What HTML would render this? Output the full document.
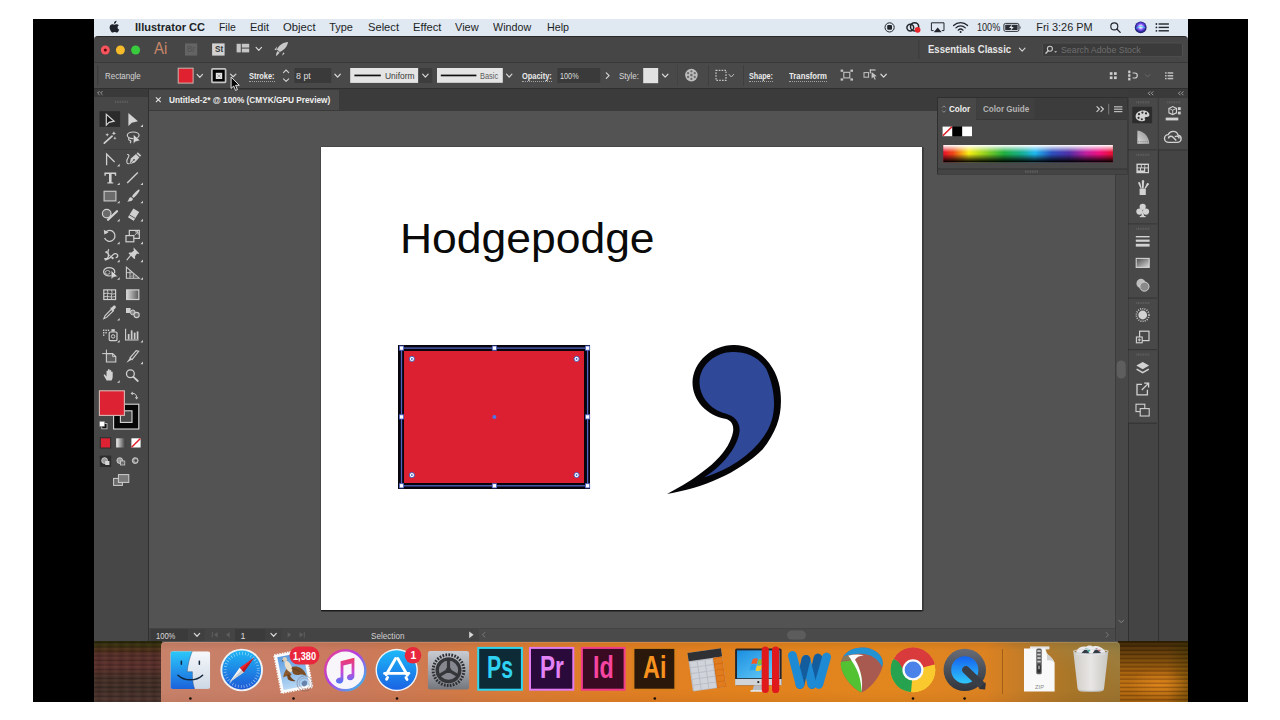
<!DOCTYPE html>
<html><head><meta charset="utf-8"><title>Illustrator CC</title>
<style>
html,body{margin:0;padding:0;background:#fff;}
body{width:1280px;height:720px;position:relative;overflow:hidden;font-family:"Liberation Sans",sans-serif;}
.r{position:absolute;display:block;box-sizing:border-box;}
.t{position:absolute;white-space:nowrap;display:block;}
</style></head><body>
<div class="r" style="left:33px;top:19px;width:1215.00px;height:683.00px;background:#000;"></div>
<div class="r" style="left:93.5px;top:19px;width:1094.00px;height:683.00px;background:#535353;"></div>
<div class="r" style="left:93.5px;top:19px;width:1094.00px;height:21.00px;background:#e0e8f2;"></div>
<div class="r" style="left:93.5px;top:35.6px;width:1094.00px;height:26.40px;background:#464646;border-top:1px solid #2a2a2a;border-radius:4px 4px 0 0;"></div>
<div class="r" style="left:93.5px;top:62px;width:1094.00px;height:26.50px;background:#494949;border-top:1px solid #383838;border-bottom:1px solid #2f2f2f;"></div>
<div class="r" style="left:149px;top:88.5px;width:979.00px;height:21.50px;background:#3b3b3b;"></div>
<div class="r" style="left:149px;top:89.5px;width:189.50px;height:20.50px;background:#494949;"></div>
<div class="r" style="left:149px;top:110px;width:966.00px;height:518.00px;background:#535353;border-top:1px solid #3a3a3a;"></div>
<div class="r" style="left:320.9px;top:146.8px;width:601.10px;height:463.60px;background:#fff;box-shadow:1.4px 0 0 #3a3a3a,0 1.3px 0 #1c1c1c,1.4px 1.3px 0 #2a2a2a,-1px 0 0 #484848,0 -1px 0 #484848;"></div>
<div class="r" style="left:93.5px;top:88.5px;width:55.50px;height:552.50px;background:#474747;border-right:1px solid #303030;"></div>
<div class="r" style="left:93.5px;top:88.5px;width:54.50px;height:8.50px;background:#3a3a3a;"></div>
<div class="r" style="left:149px;top:628px;width:966.00px;height:13.00px;background:#444;"></div>
<div class="r" style="left:1115px;top:110px;width:13.00px;height:531.00px;background:#484848;border-left:1px solid #3c3c3c;"></div>
<div class="r" style="left:1127.5px;top:88.5px;width:30.00px;height:552.50px;background:#444;border-left:1px solid #303030;"></div>
<div class="r" style="left:1157.5px;top:88.5px;width:30.00px;height:552.50px;background:#444;border-left:1px solid #303030;"></div>
<div class="r" style="left:1128px;top:88.5px;width:59.50px;height:9.50px;background:#3a3a3a;"></div>
<span class="t" style="left:400.20px;top:212.62px;font:400 42.8px/51.36px 'Liberation Sans',sans-serif;color:#0a0a0a;transform:scaleX(1.0386);transform-origin:0 0;">Hodgepodge</span>
<div class="r" style="left:398.1px;top:345px;width:192.30px;height:143.50px;background:#dc2031;border:6px solid #08040c;"></div>
<svg class="r" style="left:0px;top:0px;" width="1280" height="720" viewBox="0 0 1280 720"><rect x="401.5" y="348.1" width="186.1" height="137.7" fill="none" stroke="#5064c0" stroke-width="1.3"/><rect x="399.4" y="346.0" width="4.2" height="4.2" fill="#fff" stroke="#4a60c8" stroke-width="0.8"/><rect x="399.4" y="414.8" width="4.2" height="4.2" fill="#fff" stroke="#4a60c8" stroke-width="0.8"/><rect x="399.4" y="483.7" width="4.2" height="4.2" fill="#fff" stroke="#4a60c8" stroke-width="0.8"/><rect x="492.3" y="346.0" width="4.2" height="4.2" fill="#fff" stroke="#4a60c8" stroke-width="0.8"/><rect x="492.3" y="483.7" width="4.2" height="4.2" fill="#fff" stroke="#4a60c8" stroke-width="0.8"/><rect x="585.5" y="346.0" width="4.2" height="4.2" fill="#fff" stroke="#4a60c8" stroke-width="0.8"/><rect x="585.5" y="414.8" width="4.2" height="4.2" fill="#fff" stroke="#4a60c8" stroke-width="0.8"/><rect x="585.5" y="483.7" width="4.2" height="4.2" fill="#fff" stroke="#4a60c8" stroke-width="0.8"/><circle cx="411.9" cy="358.9" r="2.6" fill="#fff" stroke="#3b50b0" stroke-width="0.9"/><circle cx="411.9" cy="358.9" r="0.9" fill="#2f57c0"/><circle cx="411.9" cy="475.1" r="2.6" fill="#fff" stroke="#3b50b0" stroke-width="0.9"/><circle cx="411.9" cy="475.1" r="0.9" fill="#2f57c0"/><circle cx="576.6" cy="358.9" r="2.6" fill="#fff" stroke="#3b50b0" stroke-width="0.9"/><circle cx="576.6" cy="358.9" r="0.9" fill="#2f57c0"/><circle cx="576.6" cy="475.1" r="2.6" fill="#fff" stroke="#3b50b0" stroke-width="0.9"/><circle cx="576.6" cy="475.1" r="0.9" fill="#2f57c0"/><circle cx="494.4" cy="416.9" r="2" fill="#4f74e6"/></svg>
<svg class="r" style="left:650px;top:330px;" width="160" height="180" viewBox="0 0 640 720"><path d="M337,60 C252,58 172,125 170,210 C170,282 228,342 300,355 C328,360 336,384 332,408 C318,480 250,560 68,656 C210,632 350,575 450,478 C512,400 530,330 522,250 C514,158 446,62 337,60 Z" fill="#050508"/>
<path d="M334,88 C267,86 200,137 198,207 C198,268 242,318 302,334 C346,346 364,378 357,414 C346,472 290,546 216,590 C322,556 420,492 470,402 C508,336 503,242 466,158 C436,108 388,88 334,88 Z" fill="#2f4898"/></svg>
<div class="r" style="left:93.5px;top:641px;width:68.50px;height:61.00px;background:#4a2a26;background:repeating-linear-gradient(180deg,rgba(0,0,0,0) 0,rgba(0,0,0,.18) 1.5px,rgba(120,70,60,.15) 3px,rgba(0,0,0,0) 4.5px),repeating-linear-gradient(90deg,rgba(0,0,0,0) 0,rgba(20,0,0,.18) 5px,rgba(0,0,0,0) 11px),linear-gradient(180deg,#2a2c0c 0,#3a3610 4px,#50341c 9px,#5c342e 14px,#603631 27px,#4a342b 35px,#44342c 48px,#523a33 61px);"></div>
<div class="r" style="left:1118px;top:641px;width:69.50px;height:61.00px;background:#7a5010;background:repeating-linear-gradient(180deg,rgba(0,0,0,0) 0,rgba(40,18,0,.30) 1.300px,rgba(255,170,40,.10) 2.700px,rgba(0,0,0,0) 4.100px),radial-gradient(ellipse 30px 16px at 58% 72%,rgba(236,140,30,.65) 0,rgba(236,140,30,0) 100%),linear-gradient(90deg,rgba(0,0,0,0) 0,rgba(0,0,0,0) 70%,rgba(30,40,0,.35) 100%),linear-gradient(180deg,#2c1c04 0,#53340a 8px,#7a4a0c 20px,#a25e0e 32px,#c07214 43px,#b2680f 52px,#9c5a0c 61px);"></div>
<div class="r" style="left:161px;top:641.5px;width:958.50px;height:60.50px;background:#d8843a;border-radius:4px 4px 0 0;background:linear-gradient(180deg,rgba(60,30,0,.10) 0,rgba(0,0,0,0) 14%,rgba(0,0,0,0) 80%,rgba(60,20,0,.06) 100%),linear-gradient(200deg,rgba(140,125,70,.9) 0,rgba(160,130,66,.6) 5%,rgba(190,135,60,.0) 12%),linear-gradient(90deg,#c8826a 0,#c97e66 10%,#ca7a5c 20%,#d07a4c 29%,#da7c36 37%,#e07e26 46%,#e2821e 60%,#e2861e 76%,#dc8222 86%,#bc7a28 91%,#a87628 95%,#9c7430 100%);box-shadow:inset 0 1px 0 rgba(255,255,255,.14);"></div>
<div class="r" style="left:1002.3px;top:648.5px;width:1.00px;height:45.50px;background:rgba(90,45,10,.38);"></div>
<svg class="r" style="left:107.87px;top:19.68px" width="13.07" height="14.17" viewBox="0 0 13.5 15.5" preserveAspectRatio="none"><path d="M8.1,3.1c0.5-0.6,0.8-1.4,0.7-2.2c-0.7,0-1.5,0.5-2,1.1C6.4,2.5,6,3.3,6.1,4.1C6.9,4.2,7.6,3.7,8.1,3.1z M9.9,8.1c0-1.5,1.2-2.2,1.3-2.3c-0.7-1-1.8-1.2-2.2-1.2C8,4.500,7.1,5.2,6.700,5.2c-0.500,0-1.200-0.600-2-0.600c-1,0-2,0.600-2.500,1.500c-1.100,1.900-0.300,4.600,0.800,6.100c0.500,0.700,1.100,1.600,1.900,1.500c0.800,0,1.100-0.500,2-0.500c0.900,0,1.200,0.500,2,0.500c0.800,0,1.400-0.800,1.900-1.500c0.600-0.900,0.800-1.700,0.800-1.700C11.600,10.500,9.900,9.900,9.900,8.100z" fill="#1e232b"/></svg>
<span class="t" style="left:135.20px;top:20.76px;font:700 10.9px/13.08px 'Liberation Sans',sans-serif;color:#1c1f24;transform:scaleX(1.0139);transform-origin:0 0;">Illustrator CC</span>
<span class="t" style="left:219.20px;top:20.76px;font:400 10.9px/13.08px 'Liberation Sans',sans-serif;color:#1c1f24;transform:scaleX(0.9565);transform-origin:0 0;">File</span>
<span class="t" style="left:250.00px;top:20.76px;font:400 10.9px/13.08px 'Liberation Sans',sans-serif;color:#1c1f24;transform:scaleX(1.0116);transform-origin:0 0;">Edit</span>
<span class="t" style="left:283.00px;top:20.76px;font:400 10.9px/13.08px 'Liberation Sans',sans-serif;color:#1c1f24;transform:scaleX(1.0348);transform-origin:0 0;">Object</span>
<span class="t" style="left:329.30px;top:20.76px;font:400 10.9px/13.08px 'Liberation Sans',sans-serif;color:#1c1f24;">Type</span>
<span class="t" style="left:367.50px;top:20.76px;font:400 10.9px/13.08px 'Liberation Sans',sans-serif;color:#1c1f24;transform:scaleX(1.0233);transform-origin:0 0;">Select</span>
<span class="t" style="left:412.50px;top:20.76px;font:400 10.9px/13.08px 'Liberation Sans',sans-serif;color:#1c1f24;transform:scaleX(1.0300);transform-origin:0 0;">Effect</span>
<span class="t" style="left:455.30px;top:20.76px;font:400 10.9px/13.08px 'Liberation Sans',sans-serif;color:#1c1f24;transform:scaleX(1.0115);transform-origin:0 0;">View</span>
<span class="t" style="left:493.40px;top:20.76px;font:400 10.9px/13.08px 'Liberation Sans',sans-serif;color:#1c1f24;transform:scaleX(0.9853);transform-origin:0 0;">Window</span>
<span class="t" style="left:546.50px;top:20.76px;font:400 10.9px/13.08px 'Liberation Sans',sans-serif;color:#1c1f24;transform:scaleX(0.9858);transform-origin:0 0;">Help</span>
<span class="t" style="left:977.00px;top:21.80px;font:400 10px/12.00px 'Liberation Sans',sans-serif;color:#1c1f24;transform:scaleX(0.9071);transform-origin:0 0;">100%</span>
<span class="t" style="left:1036.30px;top:20.76px;font:400 10.9px/13.08px 'Liberation Sans',sans-serif;color:#1c1f24;">Fri 3:26 PM</span>
<svg class="r" style="left:0px;top:0px;" width="1280" height="720" viewBox="0 0 1280 720"><circle cx="889.6" cy="27.4" r="4.6" fill="none" stroke="#22262c" stroke-width="1"/><rect x="887.2" y="25" width="4.8" height="4.8" rx="1" fill="#22262c"/><g fill="none" stroke="#22262c" stroke-width="1.5"><circle cx="910.3" cy="27.6" r="3.4"/><circle cx="914.6" cy="26.8" r="4.1"/></g><circle cx="917.6" cy="29.8" r="2.9" fill="#e8262a"/><path d="M933.6,30.6h-2.2v-7.8h12.600v7.800h-2.200" fill="none" stroke="#22262c" stroke-width="1"/><path d="M937.700,27.600l4,4.600h-8z" fill="#22262c"/><g fill="none" stroke="#22262c" stroke-width="1.25" stroke-linecap="round"><path d="M953.6,25.500a10,10 0 0 1 14,0"/><path d="M955.900,27.900a6.700,6.700 0 0 1 9.400,0"/><path d="M958.200,30.200a3.400,3.400 0 0 1 4.800,0"/></g><circle cx="960.6" cy="32.100" r="1" fill="#22262c"/><rect x="1003.9" y="23.4" width="15" height="8" rx="1.600" fill="none" stroke="#30343a" stroke-width="1"/><rect x="1005.2" y="24.700" width="12.400" height="5.400" rx="0.600" fill="#2b2f35"/><path d="M1019.700,25.900v3c1.200-0.200,1.200-2.800,0-3z" fill="#30343a"/><path d="M1012.300,24.300l-3.300,3.600h2.300l-1,3l3.500-3.800h-2.300z" fill="#e6ecf4"/><circle cx="1114.3" cy="26.400" r="3.500" fill="none" stroke="#22262c" stroke-width="1.150"/><path d="M1116.900,29l3.300,3.400" stroke="#22262c" stroke-width="1.300" stroke-linecap="round"/><defs><radialGradient id="siri" cx="50%" cy="45%" r="60%"><stop offset="0" stop-color="#fff"/><stop offset="0.22" stop-color="#d9c8ff"/><stop offset="0.45" stop-color="#7a4cf0"/><stop offset="0.700" stop-color="#2b2a9a"/><stop offset="1" stop-color="#14163a"/></radialGradient></defs><circle cx="1140.700" cy="27.400" r="5.900" fill="url(#siri)"/><path d="M1136.500,28.500c2-3,5.500-3,8.300-0.500" stroke="#35d8f0" stroke-width="1.100" fill="none" opacity=".8"/><g fill="#22262c"><circle cx="1156.400" cy="24" r="0.900"/><circle cx="1156.400" cy="27.400" r="0.900"/><circle cx="1156.400" cy="30.800" r="0.900"/><rect x="1158.600" y="23.300" width="10.300" height="1.400"/><rect x="1158.600" y="26.700" width="10.300" height="1.400"/><rect x="1158.600" y="30.100" width="10.300" height="1.400"/></g></svg>
<svg class="r" style="left:0px;top:0px;" width="1280" height="720" viewBox="0 0 1280 720"><circle cx="105.3" cy="50" r="4.5" fill="#f9545c"/><circle cx="105.3" cy="50" r="1.5" fill="#5a0a10"/><circle cx="120.4" cy="50" r="4.5" fill="#f6bb2a"/><circle cx="135.6" cy="50" r="4.5" fill="#38cb3e"/><rect x="185" y="43.4" width="12.2" height="12.2" fill="#646464"/><rect x="212.1" y="43.4" width="12.5" height="12.2" fill="#d2d2d2"/><g fill="#c6c6c6"><rect x="236.6" y="43.8" width="4.2" height="8.6"/><rect x="241.8" y="43.800" width="7.400" height="3.800"/><rect x="241.800" y="48.600" width="7.400" height="3.800"/></g><path d="M256.10,47.45L258.80,50.35L261.50,47.45" fill="none" stroke="#d6d6d6" stroke-width="1.2" stroke-linecap="round" stroke-linejoin="round"/><g fill="#c8c8c8"><path d="M288,42c-4.800,0.200 -9,3.200 -11.200,7.400l3,2.600c4.200,-1.800 7.600,-5.400 8.200,-10z"/><path d="M277,46.600l-2.600,3.200l2,0.400z"/><path d="M283.200,52.200l-1.200,3.600l2.600,-2.200z"/><path d="M277.600,51l2,1.800l-3.400,3.400c-0.400,-1.800 0.200,-3.800 1.400,-5.200z"/></g><rect x="918.4" y="40" width="1" height="19" fill="#3a3a3a"/><path d="M1019.40,48.10L1022.20,51.10L1025.00,48.10" fill="none" stroke="#d0d0d0" stroke-width="1.2" stroke-linecap="round" stroke-linejoin="round"/><rect x="1042.5" y="43" width="140" height="13.4" rx="1.5" fill="#3b3b3b" stroke="#4e4e4e" stroke-width="1"/><circle cx="1049.9" cy="48.8" r="2.500" fill="none" stroke="#c8c8c8" stroke-width="1.100"/><path d="M1048.200,50.700l-2.300,2.500" stroke="#c8c8c8" stroke-width="1.300" stroke-linecap="round"/><path d="M1054.100,51.200l1.500,1.600l1.500-1.600z" fill="#c8c8c8"/><rect x="97.300" y="65.500" width="1" height="20" fill="#3a3a3a"/><rect x="178.200" y="68.200" width="14.900" height="14.900" fill="#e02230" stroke="#cbb6b0" stroke-width="1"/><path d="M197.10,74.45L199.80,77.35L202.50,74.45" fill="none" stroke="#d6d6d6" stroke-width="1.2" stroke-linecap="round" stroke-linejoin="round"/><rect x="211.900" y="68.900" width="13.700" height="13.500" rx="1" fill="#030303" stroke="#c4c4c4" stroke-width="1.700"/><rect x="215.800" y="72.800" width="6.400" height="6.200" fill="#e2e2e2"/><path d="M217.400,74.400l3.200,3m0,-3l-3.200,3" stroke="#8a8a8a" stroke-width="0.800"/><path d="M230.50,74.10L233.20,76.70L235.90,74.10" fill="none" stroke="#d6d6d6" stroke-width="1.2" stroke-linecap="round" stroke-linejoin="round"/><path d="M283.500,72.600l2.600,-2.600l2.600,2.600M283.500,78.800l2.600,2.600l2.600,-2.600" fill="none" stroke="#d0d0d0" stroke-width="1.100" stroke-linecap="round" stroke-linejoin="round"/><rect x="294.400" y="68" width="36.800" height="15" fill="#3a3a3a"/><path d="M334.90,74.25L337.60,77.15L340.30,74.25" fill="none" stroke="#d6d6d6" stroke-width="1.2" stroke-linecap="round" stroke-linejoin="round"/><rect x="350.200" y="68" width="68" height="14.900" fill="#e4e4e4"/><rect x="354.400" y="74.600" width="26.400" height="1.700" fill="#111"/><rect x="418.600" y="68" width="13.600" height="14.900" fill="#3d3d3d"/><path d="M422.70,74.15L425.40,77.05L428.10,74.15" fill="none" stroke="#d6d6d6" stroke-width="1.2" stroke-linecap="round" stroke-linejoin="round"/><rect x="437" y="68" width="65.800" height="14.800" fill="#e4e4e4"/><rect x="440.800" y="74.600" width="35.600" height="1.700" fill="#111"/><path d="M506.50,74.15L509.20,77.05L511.90,74.15" fill="none" stroke="#d6d6d6" stroke-width="1.2" stroke-linecap="round" stroke-linejoin="round"/><rect x="557.400" y="68" width="42.800" height="15" fill="#3a3a3a"/><path d="M606.300,72.800l2.800,2.800l-2.800,2.800" fill="none" stroke="#d6d6d6" stroke-width="1.200" stroke-linecap="round" stroke-linejoin="round"/><rect x="643.200" y="68" width="15" height="15.200" fill="#e2e2e2"/><path d="M662.50,74.25L665.20,77.15L667.90,74.25" fill="none" stroke="#d6d6d6" stroke-width="1.2" stroke-linecap="round" stroke-linejoin="round"/><rect x="708" y="65" width="1" height="21" fill="#3f3f3f"/><rect x="743" y="65" width="1" height="21" fill="#3f3f3f"/><rect x="677" y="65" width="1" height="21" fill="#424242"/><circle cx="691.400" cy="75.100" r="6.300" fill="#bdbdbd"/><g fill="#6a6a6a"><circle cx="691.400" cy="71.300" r="1.150"/><circle cx="694.700" cy="73.200" r="1.150"/><circle cx="694.700" cy="77" r="1.150"/><circle cx="691.400" cy="78.900" r="1.150"/><circle cx="688.100" cy="77" r="1.150"/><circle cx="688.100" cy="73.200" r="1.150"/><circle cx="691.400" cy="75.100" r="1.300"/></g><rect x="716" y="70.300" width="10" height="10" fill="none" stroke="#c4c4c4" stroke-width="1.200" stroke-dasharray="1.600 1.200"/><path d="M729.00,74.40L731.30,77.00L733.60,74.40" fill="none" stroke="#bbb" stroke-width="1" stroke-linecap="round" stroke-linejoin="round"/><g fill="none" stroke="#c4c4c4" stroke-width="1.100"><rect x="843.800" y="72.300" width="6" height="5.600"/></g><g fill="#c4c4c4"><rect x="840.600" y="69.600" width="2.600" height="2.200"/><rect x="850.400" y="69.600" width="2.600" height="2.200"/><rect x="840.600" y="78.400" width="2.600" height="2.200"/><rect x="850.400" y="78.400" width="2.600" height="2.200"/></g><g fill="#c4c4c4"><rect x="864" y="72.600" width="4.600" height="4.600" fill="none" stroke="#c4c4c4" stroke-width="1"/><rect x="869.800" y="69.400" width="5.800" height="1.200"/><rect x="869.800" y="69.400" width="1.200" height="4"/><path d="M871.600,72l5.200,4.300l-2.300,0.300l1.300,2.700l-1.100,0.500l-1.300-2.700l-1.800,1.500z"/></g><path d="M880.90,74.25L883.60,77.15L886.30,74.25" fill="none" stroke="#d6d6d6" stroke-width="1.2" stroke-linecap="round" stroke-linejoin="round"/><g fill="#cfcfcf"><rect x="1109.800" y="72.200" width="2.700" height="2.700"/><rect x="1114" y="72.200" width="2.700" height="2.700"/><rect x="1109.800" y="76.400" width="2.700" height="2.700"/><rect x="1114" y="76.400" width="2.700" height="2.700"/></g><g fill="#cfcfcf"><rect x="1128.200" y="70.600" width="2.200" height="2.600"/><rect x="1128.200" y="74.200" width="2.200" height="2.600"/><rect x="1128.200" y="77.800" width="2.200" height="2.600"/></g><path d="M1132.600,73h2.200a2.500,2.500 0 0 1 0,5h-2.200" fill="none" stroke="#cfcfcf" stroke-width="1.200"/><path d="M1145.30,74.40L1147.60,77.00L1149.90,74.40" fill="none" stroke="#686868" stroke-width="1" stroke-linecap="round" stroke-linejoin="round"/><g fill="#bdbdbd"><rect x="1165" y="72.200" width="1.600" height="1.500"/><rect x="1165" y="75" width="1.600" height="1.500"/><rect x="1165" y="77.800" width="1.600" height="1.500"/><rect x="1167.600" y="72.200" width="5.600" height="1.500"/><rect x="1167.600" y="75" width="5.600" height="1.500"/><rect x="1167.600" y="77.800" width="5.600" height="1.500"/></g></svg>
<span class="t" style="left:154.10px;top:38.54px;font:400 17.1px/20.52px 'Liberation Sans',sans-serif;color:#c8876a;transform:scaleX(0.8747);transform-origin:0 0;">Ai</span>
<span class="t" style="left:187.20px;top:44.26px;font:700 8.4px/10.08px 'Liberation Sans',sans-serif;color:#555;transform:scaleX(0.8784);transform-origin:0 0;">Br</span>
<span class="t" style="left:214.60px;top:44.02px;font:700 8.8px/10.56px 'Liberation Sans',sans-serif;color:#363636;transform:scaleX(0.9204);transform-origin:0 0;">St</span>
<span class="t" style="left:928.20px;top:43.68px;font:700 10.2px/12.24px 'Liberation Sans',sans-serif;color:#e6e6e6;transform:scaleX(0.9346);transform-origin:0 0;">Essentials Classic</span>
<span class="t" style="left:1061.20px;top:44.72px;font:400 9.3px/11.16px 'Liberation Sans',sans-serif;color:#6e6e6e;transform:scaleX(0.9469);transform-origin:0 0;">Search Adobe Stock</span>
<span class="t" style="left:105.10px;top:70.72px;font:400 9.3px/11.16px 'Liberation Sans',sans-serif;color:#d4d4d4;transform:scaleX(0.8549);transform-origin:0 0;">Rectangle</span>
<span class="t" style="left:249.30px;top:70.72px;font:700 9.3px/11.16px 'Liberation Sans',sans-serif;color:#ececec;transform:scaleX(0.7989);transform-origin:0 0;">Stroke:</span>
<div class="r" style="left:249.3px;top:80.6px;width:25.60px;height:1.00px;background:transparent;border-top:1px dotted rgba(225,225,225,.6);"></div>
<span class="t" style="left:296.00px;top:70.72px;font:400 9.3px/11.16px 'Liberation Sans',sans-serif;color:#dedede;transform:scaleX(0.9541);transform-origin:0 0;">8 pt</span>
<span class="t" style="left:384.60px;top:70.72px;font:400 9.3px/11.16px 'Liberation Sans',sans-serif;color:#3a3a3a;transform:scaleX(0.9092);transform-origin:0 0;">Uniform</span>
<span class="t" style="left:480.20px;top:70.72px;font:400 9.3px/11.16px 'Liberation Sans',sans-serif;color:#5c5c5c;transform:scaleX(0.8003);transform-origin:0 0;">Basic</span>
<span class="t" style="left:522.40px;top:70.72px;font:700 9.3px/11.16px 'Liberation Sans',sans-serif;color:#ececec;transform:scaleX(0.8009);transform-origin:0 0;">Opacity:</span>
<div class="r" style="left:522.4px;top:80.6px;width:29.80px;height:1.00px;background:transparent;border-top:1px dotted rgba(225,225,225,.6);"></div>
<span class="t" style="left:560.20px;top:70.72px;font:400 9.3px/11.16px 'Liberation Sans',sans-serif;color:#dedede;transform:scaleX(0.7820);transform-origin:0 0;">100%</span>
<span class="t" style="left:619.20px;top:70.72px;font:400 9.3px/11.16px 'Liberation Sans',sans-serif;color:#d8d8d8;transform:scaleX(0.8599);transform-origin:0 0;">Style:</span>
<span class="t" style="left:749.20px;top:70.72px;font:700 9.3px/11.16px 'Liberation Sans',sans-serif;color:#ececec;transform:scaleX(0.7740);transform-origin:0 0;">Shape:</span>
<div class="r" style="left:749.2px;top:80.6px;width:24.00px;height:1.00px;background:transparent;border-top:1px dotted rgba(225,225,225,.6);"></div>
<span class="t" style="left:788.80px;top:70.72px;font:700 9.3px/11.16px 'Liberation Sans',sans-serif;color:#ececec;transform:scaleX(0.8355);transform-origin:0 0;">Transform</span>
<div class="r" style="left:788.8px;top:80.6px;width:38.00px;height:1.00px;background:transparent;border-top:1px dotted rgba(225,225,225,.6);"></div>
<svg class="r" style="left:0px;top:0px;" width="1280" height="720" viewBox="0 0 1280 720"><path d="M231.100,77v11.400l2.600,-2.400l1.800,4.400l1.900,-0.800l-1.800,-4.300h3.700z" fill="#050505" stroke="#f2f2f2" stroke-width="0.900" stroke-linejoin="round"/></svg>
<svg class="r" style="left:0px;top:0px;" width="1280" height="720" viewBox="0 0 1280 720"><path d="M99.500,91.100l-1.900,1.900l1.900,1.900M102.500,91.100l-1.900,1.900l1.900,1.900" fill="none" stroke="#a8a8a8" stroke-width="0.900"/><g fill="#5e5e5e"><rect x="115.0" y="100.800" width="1" height="2.200"/><rect x="116.7" y="100.800" width="1" height="2.200"/><rect x="118.4" y="100.800" width="1" height="2.200"/><rect x="120.1" y="100.800" width="1" height="2.200"/><rect x="121.8" y="100.800" width="1" height="2.200"/><rect x="123.5" y="100.800" width="1" height="2.200"/><rect x="125.2" y="100.800" width="1" height="2.200"/><rect x="126.9" y="100.800" width="1" height="2.200"/></g><rect x="99.500" y="111.200" width="20.600" height="15.700" fill="#2b2b2b"/><path d="M106.300,114.300v10.800l2.800,-2.700l5,-1.200z" fill="#1a1a1a" stroke="#d4d4d4" stroke-width="1.200" stroke-linejoin="miter" stroke-miterlimit="3"/><path d="M128.400,113v13l3.400,-3.200l6.200,-1.500z" fill="#d4d4d4"/><path d="M143,126.9h-2.6l2.6,-2.600z" fill="#cfcfcf"/><path d="M104.300,143.200l7.800,-7" stroke="#d0d0d0" stroke-width="1.700" stroke-linecap="round"/><g fill="#d0d0d0"><path d="M107.200,132.900l0.600,1.300l1.300,0.500l-1.300,0.500l-0.600,1.300l-0.600,-1.300l-1.300,-0.500l1.300,-0.500z"/><path d="M113.900,131.300l0.700,1.400l1.400,0.600l-1.400,0.600l-0.700,1.400l-0.700,-1.400l-1.400,-0.600l1.400,-0.600z"/><path d="M114.900,136.600l0.500,1.100l1.100,0.500l-1.100,0.500l-0.500,1.100l-0.500,-1.100l-1.100,-0.500l1.100,-0.500z"/></g><ellipse cx="133.200" cy="135.300" rx="5.900" ry="3.300" fill="none" stroke="#d0d0d0" stroke-width="1.200"/><path d="M129.200,137.800c-1.200,1 -0.600,2.400 0.700,2.600c1.200,0.200 1.400,1.800 0,2.600" fill="none" stroke="#d0d0d0" stroke-width="1.100"/><path d="M133.400,134.400v9.300l2.300,-2.200l4.400,-0.900z" fill="#d8d8d8" stroke="#484848" stroke-width="0.500"/><rect x="104" y="149" width="34" height="0.800" fill="#3c3c3c"/><path d="M106.600,165.200v-11.200l8,8" fill="none" stroke="#cfcfcf" stroke-width="1.300"/><path d="M119.7,166.4h-2.6l2.6,-2.600z" fill="#cfcfcf"/><path d="M127.100,154.600c1.800,-0.600 2.400,1.200 1.200,2.800c-1.400,1.800 -2,3.600 -1.400,5.200c0.500,1.300 1.800,1.400 2.600,0.800" fill="none" stroke="#cfcfcf" stroke-width="1.100"/><path d="M129.600,164.200l1.200,-5.600l5.200,-4.600l3.400,3.400l-4.600,5.200z" fill="#cfcfcf"/><path d="M136.600,153.400l1.200,-1.200l3.400,3.400l-1.200,1.200z" fill="#cfcfcf"/><path d="M130.200,163.600l3.400,-3.400" stroke="#484848" stroke-width="0.800"/><circle cx="134" cy="159.800" r="0.900" fill="#484848"/><path d="M104.400,172.500h11.800v3.200h-1.200l-0.400,-1.700h-3v8.200l1.700,0.300v1h-6v-1l1.700,-0.300v-8.200h-3l-0.400,1.700h-1.200z" fill="#d2d2d2"/><path d="M119.7,185h-2.6l2.6,-2.600z" fill="#cfcfcf"/><path d="M127.200,183l10.600,-10.400" stroke="#cfcfcf" stroke-width="1.400"/><path d="M143,185h-2.6l2.6,-2.600z" fill="#cfcfcf"/><rect x="104.100" y="191.300" width="11.800" height="9.600" fill="#6c6c6c" stroke="#c4c4c4" stroke-width="1.200"/><path d="M119.7,203.3h-2.6l2.6,-2.600z" fill="#cfcfcf"/><path d="M138.600,189.600c-1.600,0.800 -5.400,5 -6.600,6.800l1.600,1.600c1.800,-1.200 5.400,-5.800 5.900,-7.200c0.200,-0.700 -0.300,-1.400 -0.900,-1.200z" fill="#d0d0d0"/><path d="M131.300,197.200l1.800,1.800c-0.600,2 -3.400,2.900 -6.200,2.400c1.600,-0.800 1.600,-1.600 1.900,-2.500c0.400,-1.200 1.400,-1.800 2.500,-1.700z" fill="#d0d0d0"/><path d="M143,203.3h-2.6l2.6,-2.600z" fill="#cfcfcf"/><circle cx="106.700" cy="213.600" r="4.300" fill="#6a6a6a" stroke="#cfcfcf" stroke-width="1.200"/><path d="M108,219.800l9,-8.600" stroke="#d4d4d4" stroke-width="2.200" stroke-linecap="round"/><path d="M108,219.800l9,-8.600" stroke="#484848" stroke-width="0" /><path d="M119.7,221.4h-2.6l2.6,-2.600z" fill="#cfcfcf"/><path d="M133.400,208.600l5.800,3.400l-5,8l-5.800,-3.400z" fill="#cfcfcf"/><path d="M129.400,214.900l5.800,3.400" stroke="#484848" stroke-width="0.900"/><path d="M128.600,216.400l5.800,3.400l-0.600,0.900l-5.800,-3.400z" fill="#e6e6e6"/><path d="M143,221.4h-2.6l2.6,-2.600z" fill="#cfcfcf"/><path d="M105.600,232.200a5.400,5.400 0 1 1 -1,5.800" fill="none" stroke="#cfcfcf" stroke-width="1.300"/><path d="M103.800,229.800l0.500,4.600l4.200,-1.800z" fill="#cfcfcf"/><path d="M119.7,244.2h-2.6l2.6,-2.600z" fill="#cfcfcf"/><rect x="129.300" y="230.400" width="10" height="8" fill="none" stroke="#cfcfcf" stroke-width="1.200"/><rect x="126" y="235.600" width="7.800" height="6.200" fill="#484848" stroke="#cfcfcf" stroke-width="1.200"/><path d="M134.600,235.200l3.400,-3.400m-2.800,0h2.800v2.800" fill="none" stroke="#cfcfcf" stroke-width="1"/><path d="M143,244.2h-2.6l2.6,-2.600z" fill="#cfcfcf"/><path d="M104.200,258.600c3,0.600 4.400,-1 4.200,-3.600c-0.200,-2.600 -1.200,-4.400 0.600,-5.600M104.800,260c3.600,-0.600 5.600,-2.200 7.400,-4.400c1.800,-2.200 3.600,-2.600 5,-1.200c1.200,1.400 0,3.400 -1.600,3.200" fill="none" stroke="#d0d0d0" stroke-width="1.300"/><path d="M106.600,252.400l5.800,5.600" stroke="#d0d0d0" stroke-width="1"/><circle cx="106.400" cy="252.200" r="1.100" fill="#d0d0d0"/><circle cx="112.600" cy="258.200" r="1.100" fill="#d0d0d0"/><path d="M119.7,262.2h-2.6l2.6,-2.600z" fill="#cfcfcf"/><path d="M133.600,247.600l5.800,5.800l-1.200,0.600l-1.200,-0.400l-2,2.600l0.200,2.200l-1,0.600l-5.600,-5.600l0.600,-1l2.200,0.200l2.600,-2l-0.400,-1.200z" fill="#d0d0d0"/><path d="M130.600,255.400l-3.600,4.400" stroke="#d0d0d0" stroke-width="1.100" stroke-linecap="round"/><path d="M143,262.2h-2.6l2.6,-2.600z" fill="#cfcfcf"/><ellipse cx="109.200" cy="271.800" rx="5.600" ry="4.200" fill="none" stroke="#cfcfcf" stroke-width="1.200"/><ellipse cx="107.600" cy="272.400" rx="2.400" ry="1.900" fill="none" stroke="#bdbdbd" stroke-width="0.900"/><path d="M111.200,270.400v8.800l2.200,-2l4.200,-0.800z" fill="#d8d8d8" stroke="#484848" stroke-width="0.500"/><path d="M119.7,279.8h-2.6l2.6,-2.600z" fill="#cfcfcf"/><path d="M126.400,267.200v11h12.800z" fill="none" stroke="#cfcfcf" stroke-width="1.100"/><path d="M126.400,272.600l6.200,0.200M130,270.400v7.800M133.400,273.400v4.800" stroke="#cfcfcf" stroke-width="0.900"/><path d="M130.500,275.200h5.500M129,276.700h8.500" stroke="#9c9c9c" stroke-width="0.700"/><path d="M143,279.8h-2.6l2.6,-2.600z" fill="#cfcfcf"/><rect x="103.800" y="289.900" width="11.800" height="9.600" fill="none" stroke="#cfcfcf" stroke-width="1.200"/><path d="M103.800,293.600c4,-1.600 7.600,1.800 11.800,0M103.800,296.800c4,-1.400 7.600,1.400 11.800,-0.400M107.400,289.900c1.400,3.200 -1.200,6.400 0.400,9.600M111.600,289.900c1.400,3.200 -1.400,6.400 0.200,9.600" fill="none" stroke="#cfcfcf" stroke-width="0.900"/><defs><linearGradient id="tg" x1="0" x2="1"><stop offset="0" stop-color="#d8d8d8"/><stop offset="1" stop-color="#585858"/></linearGradient></defs><rect x="126.600" y="289.900" width="12.200" height="9.600" fill="url(#tg)" stroke="#cfcfcf" stroke-width="1.200"/><path d="M103.800,318.600l1.200,-2.800l6.200,-6.400l1.800,1.800l-6.400,6.200z" fill="none" stroke="#d0d0d0" stroke-width="1.100"/><path d="M110.600,308.800l2.800,2.800l0.800,-0.800l-0.600,-0.800l1.800,-1.800c0.600,-0.600 0.600,-1.600 0,-2.200s-1.600,-0.600 -2.200,0l-1.800,1.800l-0.800,-0.600z" fill="#d0d0d0"/><path d="M119.7,320.6h-2.6l2.6,-2.600z" fill="#cfcfcf"/><rect x="126" y="308" width="4.600" height="5" fill="#cfcfcf"/><circle cx="132.800" cy="312.400" r="2.400" fill="#8a8a8a" stroke="#cfcfcf" stroke-width="1"/><circle cx="136.600" cy="315" r="2.600" fill="#6a6a6a" stroke="#cfcfcf" stroke-width="1.100"/><rect x="109.200" y="332" width="7.800" height="8.600" rx="1" fill="none" stroke="#cfcfcf" stroke-width="1.200"/><rect x="111.400" y="329.200" width="3.400" height="2.400" fill="#cfcfcf"/><circle cx="113.100" cy="336.400" r="1.700" fill="none" stroke="#cfcfcf" stroke-width="1"/><g fill="#cfcfcf"><rect x="103" y="329.600" width="1.400" height="1.400"/><rect x="105.400" y="329.600" width="1.400" height="1.400"/><rect x="107.800" y="329.600" width="1.400" height="1.400"/><rect x="103" y="332" width="1.400" height="1.400"/><rect x="105.400" y="332" width="1.400" height="1.400"/><rect x="103" y="334.400" width="1.400" height="1.400"/></g><path d="M119.7,342.6h-2.6l2.6,-2.600z" fill="#cfcfcf"/><path d="M125.600,328.800v11.200h13" fill="none" stroke="#cfcfcf" stroke-width="1.100"/><g fill="#cfcfcf"><rect x="127.800" y="334" width="1.700" height="5.400"/><rect x="130.800" y="330.400" width="1.700" height="9"/><rect x="133.800" y="332.600" width="1.700" height="6.800"/><rect x="136.700" y="331.400" width="1.700" height="8"/></g><path d="M143,342.6h-2.6l2.6,-2.600z" fill="#cfcfcf"/><path d="M106.400,349.600v4M102.200,353.600h4.200" stroke="#cfcfcf" stroke-width="1"/><path d="M106.400,353.600h6.200l3.200,3v5.400h-9.400z" fill="#5c5c5c" stroke="#cfcfcf" stroke-width="1.100"/><path d="M112.600,353.600v3h3.200" fill="none" stroke="#cfcfcf" stroke-width="0.900"/><path d="M138.800,351.200l-2.600,-0.600l-6.200,7.200l2,1.800z" fill="none" stroke="#cfcfcf" stroke-width="1.100"/><path d="M130,357.800l2,1.800l-5.600,3.200z" fill="#cfcfcf"/><path d="M143,364.2h-2.6l2.6,-2.600z" fill="#cfcfcf"/><path d="M106.600,380.400c-1,-1.600 -2.200,-3.600 -2.800,-4.800c-0.400,-1 0.800,-1.500 1.400,-0.700l1.300,1.700v-5.400c0,-1 1.500,-1 1.500,0v-1.400c0,-1 1.600,-1 1.600,0v1c0,-1 1.600,-1 1.600,0v1.400c0,-0.900 1.500,-0.900 1.500,0v4.400c0,1.600 -0.500,2.800 -1.100,3.800z" fill="#d2d2d2"/><path d="M119.7,382.8h-2.6l2.6,-2.600z" fill="#cfcfcf"/><circle cx="130.400" cy="373.800" r="3.900" fill="none" stroke="#d0d0d0" stroke-width="1.300"/><path d="M133.400,376.800l4.400,4.200" stroke="#d0d0d0" stroke-width="1.800" stroke-linecap="round"/><rect x="113.600" y="404.200" width="25.200" height="24.800" fill="#060606" stroke="#d8d8d8" stroke-width="1.100"/><rect x="120.400" y="410.800" width="11.600" height="11.600" fill="#484848" stroke="#d8d8d8" stroke-width="1.100"/><rect x="99.400" y="390.800" width="25" height="24.600" fill="#dc2233" stroke="#d9b8b4" stroke-width="1.100"/><path d="M132.600,393.400c2.600,0 4,1.400 4,4" fill="none" stroke="#cfcfcf" stroke-width="1"/><path d="M132.800,391.600v3.600l-2.200,-1.800z" fill="#cfcfcf"/><path d="M134.800,397.200h3.600l-1.800,2.200z" fill="#cfcfcf"/><rect x="101.800" y="423.600" width="5.200" height="5.200" fill="#111" stroke="#cfcfcf" stroke-width="0.800"/><rect x="99.600" y="421.400" width="5" height="5" fill="#fff" stroke="#777" stroke-width="0.500"/><rect x="99.800" y="437.200" width="11.400" height="11.400" fill="#303030"/><rect x="100.900" y="438.300" width="9.200" height="9.200" fill="#dc2233"/><defs><linearGradient id="tg2" x1="0" x2="1"><stop offset="0" stop-color="#f4f4f4"/><stop offset="1" stop-color="#3a3a3a"/></linearGradient></defs><rect x="116.200" y="438.300" width="9.200" height="9.200" fill="url(#tg2)"/><rect x="131.400" y="438.300" width="9.200" height="9.200" fill="#fff"/><path d="M131.600,447.300l8.800,-8.800" stroke="#e0202c" stroke-width="1.500"/><rect x="99.800" y="455.600" width="11.400" height="11.400" fill="#2e2e2e"/><circle cx="104.60000000000001" cy="460.600" r="2.900" fill="#9a9a9a" stroke="#d4d4d4" stroke-width="0.900"/><circle cx="119.8" cy="460.600" r="2.900" fill="#9a9a9a" stroke="#d4d4d4" stroke-width="0.900"/><circle cx="135.2" cy="460.600" r="2.900" fill="#9a9a9a" stroke="#d4d4d4" stroke-width="0.900"/><rect x="105.200" y="461" width="4.200" height="4" fill="#d8d8d8"/><rect x="120.600" y="461" width="4.200" height="4" fill="#686868" stroke="#d8d8d8" stroke-width="0.700"/><circle cx="135.800" cy="460.600" r="1.300" fill="#484848"/><rect x="113.600" y="478.400" width="8.800" height="7" fill="#6a6a6a" stroke="#cfcfcf" stroke-width="1"/><rect x="118.400" y="474.600" width="10.400" height="7.800" fill="#7a7a7a" stroke="#cfcfcf" stroke-width="1"/></svg>
<span class="t" style="left:168.80px;top:94.84px;font:700 9.1px/10.92px 'Liberation Sans',sans-serif;color:#f0f0f0;transform:scaleX(0.9105);transform-origin:0 0;">Untitled-2* @ 100% (CMYK/GPU Preview)</span>
<svg class="r" style="left:0px;top:0px;" width="1280" height="720" viewBox="0 0 1280 720"><path d="M155.900,97.300l4.800,4.800m0,-4.800l-4.800,4.800" stroke="#e4e4e4" stroke-width="1.100"/><rect x="150.500" y="629" width="37.500" height="12" fill="#3b3b3b"/><rect x="188.600" y="629" width="16" height="12" fill="#404040"/><path d="M194.30,633.35L197.00,636.25L199.70,633.35" fill="none" stroke="#d6d6d6" stroke-width="1.2" stroke-linecap="round" stroke-linejoin="round"/><rect x="235" y="629" width="30.500" height="12" fill="#3b3b3b"/><rect x="266" y="629" width="15.500" height="12" fill="#404040"/><path d="M270.90,633.35L273.60,636.25L276.30,633.35" fill="none" stroke="#d6d6d6" stroke-width="1.2" stroke-linecap="round" stroke-linejoin="round"/><g fill="#5e5e5e"><rect x="211.800" y="632" width="1" height="5.600"/><path d="M217.600,632v5.600l-3.600,-2.800z"/><path d="M229.600,632v5.600l-3.600,-2.800z"/><path d="M287.600,632v5.600l3.600,-2.800z"/><path d="M299.600,632v5.600l3.600,-2.800z"/><rect x="303.800" y="632" width="1" height="5.600"/></g><path d="M469.200,631.400v6.800l4.400,-3.400z" fill="#d8d8d8"/><rect x="479" y="629" width="636" height="12" fill="#4a4a4a"/><rect x="787" y="630.600" width="19" height="9" rx="4.500" fill="#5c5c5c"/><path d="M485,632.200l-2.400,2.600l2.400,2.600" fill="none" stroke="#7a7a7a" stroke-width="1"/><path d="M1106,632.200l2.400,2.600l-2.400,2.600" fill="none" stroke="#7a7a7a" stroke-width="1"/><rect x="1116.800" y="360.500" width="9" height="18" rx="4.500" fill="#5e5e5e"/><path d="M1118.800,620.200l2.400,2.400l2.400,-2.400" fill="none" stroke="#8a8a8a" stroke-width="1"/><rect x="937" y="97" width="190.500" height="77.500" fill="#2f2f2f"/><rect x="938" y="98" width="189" height="21.500" fill="#3c3c3c"/><rect x="938" y="98" width="38.200" height="22" fill="#484848"/><rect x="976.800" y="98" width="58" height="21" fill="#404040"/><rect x="938" y="119.800" width="189" height="48.800" fill="#484848"/><rect x="938" y="169.400" width="189" height="4.600" fill="#444"/><g fill="#606060"><rect x="1025.0" y="170.400" width="1" height="2.400"/><rect x="1026.7" y="170.400" width="1" height="2.400"/><rect x="1028.4" y="170.400" width="1" height="2.400"/><rect x="1030.1" y="170.400" width="1" height="2.400"/><rect x="1031.8" y="170.400" width="1" height="2.400"/><rect x="1033.5" y="170.400" width="1" height="2.400"/><rect x="1035.2" y="170.400" width="1" height="2.400"/><rect x="1036.9" y="170.400" width="1" height="2.400"/></g><path d="M942.200,107.600l1.700,-1.700l1.700,1.700M942.200,110.600l1.700,1.700l1.700,-1.700" fill="none" stroke="#9a9a9a" stroke-width="0.900"/><path d="M1096.600,106.400l2.800,2.700l-2.800,2.700M1100.600,106.400l2.800,2.700l-2.800,2.700" fill="none" stroke="#d4d4d4" stroke-width="1.100"/><rect x="1108.200" y="103.800" width="1" height="10.600" fill="#7a7a7a"/><g fill="#bdbdbd"><rect x="1114" y="106.200" width="8.400" height="1.200"/><rect x="1114" y="108.600" width="8.400" height="1.200"/><rect x="1114" y="111" width="8.400" height="1.200"/></g><rect x="942.600" y="126.600" width="9.800" height="9.600" fill="#fff"/><path d="M942.800,135.800l9.200,-9" stroke="#e0202c" stroke-width="1.600"/><rect x="952.400" y="126.600" width="9.800" height="9.600" fill="#000"/><rect x="962.200" y="126.600" width="9.800" height="9.600" fill="#fff"/><defs><linearGradient id="sp" x1="0" x2="1">
<stop offset="0" stop-color="#e8102a"/><stop offset="0.06" stop-color="#f04a18"/><stop offset="0.150" stop-color="#f8ee16"/><stop offset="0.250" stop-color="#8fd020"/>
<stop offset="0.360" stop-color="#1fb040"/><stop offset="0.460" stop-color="#18b090"/><stop offset="0.540" stop-color="#20b8f0"/><stop offset="0.640" stop-color="#2c50c0"/>
<stop offset="0.740" stop-color="#5030a8"/><stop offset="0.840" stop-color="#c020a0"/><stop offset="0.920" stop-color="#f01080"/><stop offset="1" stop-color="#e81030"/></linearGradient>
<linearGradient id="spv" x1="0" x2="0" y1="0" y2="1"><stop offset="0" stop-color="#fff" stop-opacity="1"/><stop offset="0.420" stop-color="#fff" stop-opacity="0"/><stop offset="0.520" stop-color="#000" stop-opacity="0"/><stop offset="1" stop-color="#000" stop-opacity="1"/></linearGradient></defs>
<rect x="943.300" y="145" width="169.600" height="17.200" fill="url(#sp)"/><rect x="943.300" y="145" width="169.600" height="17.200" fill="url(#spv)"/><path d="M1150.200,91.400l-1.900,1.900l1.900,1.900M1153.200,91.400l-1.900,1.900l1.900,1.900M1180.400,91.400l-1.900,1.900l1.900,1.900M1183.400,91.400l-1.900,1.900l1.900,1.900" fill="none" stroke="#a8a8a8" stroke-width="0.900"/><rect x="1128.500" y="98" width="28.500" height="51.5" fill="#484848"/><rect x="1128.500" y="149.5" width="28.500" height="1" fill="#333"/><g fill="#5e5e5e"><rect x="1136.3" y="101.2" width="1" height="2.200"/><rect x="1138.0" y="101.2" width="1" height="2.200"/><rect x="1139.7" y="101.2" width="1" height="2.200"/><rect x="1141.4" y="101.2" width="1" height="2.200"/><rect x="1143.1" y="101.2" width="1" height="2.200"/><rect x="1144.8" y="101.2" width="1" height="2.200"/><rect x="1146.5" y="101.2" width="1" height="2.200"/><rect x="1148.2" y="101.2" width="1" height="2.200"/></g><rect x="1128.500" y="150.5" width="28.500" height="73.0" fill="#484848"/><rect x="1128.500" y="223.5" width="28.500" height="1" fill="#333"/><g fill="#5e5e5e"><rect x="1136.3" y="153.7" width="1" height="2.200"/><rect x="1138.0" y="153.7" width="1" height="2.200"/><rect x="1139.7" y="153.7" width="1" height="2.200"/><rect x="1141.4" y="153.7" width="1" height="2.200"/><rect x="1143.1" y="153.7" width="1" height="2.200"/><rect x="1144.8" y="153.7" width="1" height="2.200"/><rect x="1146.5" y="153.7" width="1" height="2.200"/><rect x="1148.2" y="153.7" width="1" height="2.200"/></g><rect x="1128.500" y="224.5" width="28.500" height="73.2" fill="#484848"/><rect x="1128.500" y="297.7" width="28.500" height="1" fill="#333"/><g fill="#5e5e5e"><rect x="1136.3" y="227.7" width="1" height="2.200"/><rect x="1138.0" y="227.7" width="1" height="2.200"/><rect x="1139.7" y="227.7" width="1" height="2.200"/><rect x="1141.4" y="227.7" width="1" height="2.200"/><rect x="1143.1" y="227.7" width="1" height="2.200"/><rect x="1144.8" y="227.7" width="1" height="2.200"/><rect x="1146.5" y="227.7" width="1" height="2.200"/><rect x="1148.2" y="227.7" width="1" height="2.200"/></g><rect x="1128.500" y="298.7" width="28.500" height="50.6" fill="#484848"/><rect x="1128.500" y="349.3" width="28.500" height="1" fill="#333"/><g fill="#5e5e5e"><rect x="1136.3" y="301.9" width="1" height="2.200"/><rect x="1138.0" y="301.9" width="1" height="2.200"/><rect x="1139.7" y="301.9" width="1" height="2.200"/><rect x="1141.4" y="301.9" width="1" height="2.200"/><rect x="1143.1" y="301.9" width="1" height="2.200"/><rect x="1144.8" y="301.9" width="1" height="2.200"/><rect x="1146.5" y="301.9" width="1" height="2.200"/><rect x="1148.2" y="301.9" width="1" height="2.200"/></g><rect x="1128.500" y="350.3" width="28.500" height="72.4" fill="#484848"/><rect x="1128.500" y="422.7" width="28.500" height="1" fill="#333"/><g fill="#5e5e5e"><rect x="1136.3" y="353.5" width="1" height="2.200"/><rect x="1138.0" y="353.5" width="1" height="2.200"/><rect x="1139.7" y="353.5" width="1" height="2.200"/><rect x="1141.4" y="353.5" width="1" height="2.200"/><rect x="1143.1" y="353.5" width="1" height="2.200"/><rect x="1144.8" y="353.5" width="1" height="2.200"/><rect x="1146.5" y="353.5" width="1" height="2.200"/><rect x="1148.2" y="353.5" width="1" height="2.200"/></g><rect x="1158.500" y="98" width="29" height="51.500" fill="#484848"/><rect x="1158.500" y="149.500" width="29" height="1" fill="#333"/><g fill="#5e5e5e"><rect x="1167.2" y="101.2" width="1" height="2.200"/><rect x="1168.9" y="101.2" width="1" height="2.200"/><rect x="1170.6" y="101.2" width="1" height="2.200"/><rect x="1172.3" y="101.2" width="1" height="2.200"/><rect x="1174.0" y="101.2" width="1" height="2.200"/><rect x="1175.7" y="101.2" width="1" height="2.200"/><rect x="1177.4" y="101.2" width="1" height="2.200"/><rect x="1179.1" y="101.2" width="1" height="2.200"/></g><rect x="1132.300" y="106.800" width="19.800" height="16.400" fill="#2c2c2c"/><path d="M1135.600,116.400c0,-3.600 3.400,-6 7.400,-6c3.800,0 6.400,2 6.400,4.400c0,1.800 -1.600,2.400 -3,2.200c-1.600,-0.200 -2.200,1 -1.400,2c0.800,1.200 -0.400,2.200 -2.600,2.200c-3.800,0 -6.800,-1.800 -6.800,-4.800z" fill="#d2d2d2"/><g fill="#2c2c2c"><circle cx="1139" cy="114.200" r="1.100"/><circle cx="1142.400" cy="112.600" r="1.100"/><circle cx="1146" cy="113.400" r="1.100"/><circle cx="1138.600" cy="117.800" r="1.100"/><circle cx="1141.800" cy="119.200" r="1"/></g><defs><linearGradient id="cg" x1="0" x2="1" y1="1" y2="0"><stop offset="0" stop-color="#dcdcdc"/><stop offset="1" stop-color="#8a8a8a"/></linearGradient></defs><path d="M1137.400,130.400v13.400h11.800c0,-7 -5,-12.600 -11.800,-13.400z" fill="url(#cg)"/><path d="M1138,141.800h10.400" stroke="#6a6a6a" stroke-width="0.800" stroke-dasharray="1 0.800"/><rect x="1136.400" y="163.600" width="12.600" height="9.600" fill="#d2d2d2"/><g fill="#484848"><rect x="1137.800" y="165" width="3" height="2.400"/><rect x="1141.800" y="165" width="2.600" height="2.400"/><rect x="1145.200" y="165" width="2.600" height="2.400"/><rect x="1137.800" y="168.400" width="2.200" height="2"/><rect x="1141" y="168.400" width="3" height="2"/><rect x="1145.200" y="168.400" width="2.600" height="3.600"/></g><g fill="#d2d2d2"><rect x="1139.600" y="188.600" width="6.200" height="6.400"/><path d="M1140.600,188.400l-2.600,-5.600c0.600,-1 1.600,-1 2.200,0l1.600,5.600z"/><path d="M1142,188.400l-0.200,-7.600c0.800,-1.200 1.800,-1.200 2.400,0l-0.600,7.600z"/><path d="M1144.400,188.400l2.400,-5c0.800,-0.800 2,-0.400 2,0.800l-3,4.200z"/></g><g fill="#d2d2d2"><circle cx="1142.700" cy="206.800" r="3.100"/><circle cx="1139.400" cy="211.600" r="3.100"/><circle cx="1146" cy="211.600" r="3.100"/><path d="M1142.700,210l1.600,6.600h-3.200z"/><rect x="1139.800" y="216" width="5.800" height="1.200"/></g><g fill="#d2d2d2"><rect x="1135.800" y="236" width="13.800" height="1.400"/><rect x="1135.800" y="239.600" width="13.800" height="2.200"/><rect x="1135.800" y="243.800" width="13.800" height="2.800"/></g><defs><linearGradient id="pg" x1="0" x2="1" y1="0" y2="1"><stop offset="0" stop-color="#4a4a4a"/><stop offset="1" stop-color="#dadada"/></linearGradient></defs><rect x="1136.200" y="258.400" width="13" height="9" fill="url(#pg)" stroke="#d2d2d2" stroke-width="1.100"/><circle cx="1141" cy="283.400" r="4.600" fill="#bdbdbd"/><circle cx="1144.400" cy="286.600" r="4.600" fill="#8a8a8a" stroke="#d2d2d2" stroke-width="1"/><circle cx="1142.700" cy="315" r="4.400" fill="#d2d2d2"/><circle cx="1142.700" cy="315" r="6.300" fill="none" stroke="#d2d2d2" stroke-width="1.600" stroke-dasharray="0.900 1.300"/><rect x="1139.600" y="331.200" width="9.400" height="9.400" fill="none" stroke="#d2d2d2" stroke-width="1.200"/><rect x="1136.400" y="337" width="5.800" height="5.800" fill="#484848" stroke="#d2d2d2" stroke-width="1.100"/><path d="M1139.300,338.400v3M1137.800,339.900h3" stroke="#d2d2d2" stroke-width="1"/><path d="M1142.700,362l6.400,3.600l-6.400,3.600l-6.400,-3.600z" fill="#d2d2d2"/><path d="M1136.600,369.200l6.100,3.500l6.100,-3.500" fill="none" stroke="#d2d2d2" stroke-width="1.500"/><path d="M1142,384.400h-5v10.400h10.400v-5" fill="none" stroke="#d2d2d2" stroke-width="1.300"/><path d="M1141.800,390l6.600,-6.600m-4.200,-0.200h4.400v4.400" fill="none" stroke="#d2d2d2" stroke-width="1.300"/><rect x="1136" y="404.200" width="8.800" height="7.400" fill="none" stroke="#d2d2d2" stroke-width="1.100"/><rect x="1140.200" y="408.600" width="9" height="7.400" fill="#484848" stroke="#d2d2d2" stroke-width="1.100"/><g transform="translate(-1.700,0)"><path d="M1170.600,108.400l3.800,-1.800l3.800,1.800v4.400l-3.800,1.800l-3.800,-1.800z" fill="none" stroke="#d2d2d2" stroke-width="1.100"/><path d="M1170.600,108.400l3.800,1.800l3.800,-1.800M1174.400,110.200v4.400" fill="none" stroke="#d2d2d2" stroke-width="0.900"/><g fill="#d2d2d2"><rect x="1179.600" y="107.200" width="2.800" height="2.800"/><rect x="1179.600" y="111.600" width="2.800" height="2.800"/><rect x="1167.400" y="117.600" width="12.600" height="2.800"/></g><g fill="none" stroke="#d2d2d2" stroke-width="1.400"><path d="M1170.600,142.400c-2.600,0 -4.400,-1.800 -4.400,-4c0,-2.200 1.800,-3.800 3.800,-3.800c0.800,-2 2.600,-3.200 4.800,-3.200c2.400,0 4.400,1.600 5,3.800c1.800,0.200 3,1.700 3,3.500c0,2 -1.600,3.700 -3.800,3.700z"/><path d="M1170.200,138.600c0,-1.400 1.200,-2.400 2.400,-2.400c1,0 1.600,0.400 2.200,1l3.200,3.400M1176.600,136.800c0.600,-0.500 1.200,-0.700 1.900,-0.700c1.400,0 2.300,1.100 2.300,2.300"/></g></g></svg>
<span class="t" style="left:949.40px;top:103.72px;font:700 9.3px/11.16px 'Liberation Sans',sans-serif;color:#f2f2f2;transform:scaleX(0.8731);transform-origin:0 0;">Color</span>
<span class="t" style="left:983.00px;top:103.72px;font:700 9.3px/11.16px 'Liberation Sans',sans-serif;color:#b4b4b4;transform:scaleX(0.8682);transform-origin:0 0;">Color Guide</span>
<span class="t" style="left:155.60px;top:630.96px;font:400 8.9px/10.68px 'Liberation Sans',sans-serif;color:#dadada;transform:scaleX(0.8523);transform-origin:0 0;">100%</span>
<span class="t" style="left:240.40px;top:630.96px;font:400 8.9px/10.68px 'Liberation Sans',sans-serif;color:#dadada;">1</span>
<span class="t" style="left:371.40px;top:630.96px;font:400 8.9px/10.68px 'Liberation Sans',sans-serif;color:#d0d0d0;transform:scaleX(0.9177);transform-origin:0 0;">Selection</span>
<svg class="r" style="left:0px;top:0px;" width="1280" height="720" viewBox="0 0 1280 720"><defs><linearGradient id="fb" x1="0" x2="0" y1="0" y2="1"><stop offset="0" stop-color="#2cc8fa"/><stop offset="1" stop-color="#1b63dc"/></linearGradient><linearGradient id="fw" x1="0" x2="0" y1="0" y2="1"><stop offset="0" stop-color="#f6f8fb"/><stop offset="1" stop-color="#cdd8e6"/></linearGradient><linearGradient id="sf" x1="0" x2="0" y1="0" y2="1"><stop offset="0" stop-color="#1fb4f4"/><stop offset="1" stop-color="#1d5ad6"/></linearGradient><linearGradient id="it" x1="0" x2="1" y1="0" y2="1"><stop offset="0" stop-color="#f4407c"/><stop offset="0.45" stop-color="#b040e8"/><stop offset="1" stop-color="#28d0e8"/></linearGradient><linearGradient id="itn" x1="0" x2="0" y1="0" y2="1"><stop offset="0" stop-color="#f03860"/><stop offset="0.55" stop-color="#c848d8"/><stop offset="1" stop-color="#4878f8"/></linearGradient><linearGradient id="as" x1="0" x2="0" y1="0" y2="1"><stop offset="0" stop-color="#1cb8f8"/><stop offset="1" stop-color="#1b62e4"/></linearGradient><linearGradient id="spf" x1="0" x2="0" y1="0" y2="1"><stop offset="0" stop-color="#c8ccd2"/><stop offset="0.5" stop-color="#a2a6ac"/><stop offset="1" stop-color="#74787e"/></linearGradient><linearGradient id="msky" x1="0" x2="0" y1="0" y2="1"><stop offset="0" stop-color="#5c9ce0"/><stop offset="1" stop-color="#b8d8f4"/></linearGradient><linearGradient id="pscr" x1="0" x2="1" y1="0" y2="1"><stop offset="0" stop-color="#1a8ee0"/><stop offset="1" stop-color="#6cd0fa"/></linearGradient><linearGradient id="qt" x1="0" x2="0" y1="0" y2="1"><stop offset="0" stop-color="#1462f0"/><stop offset="1" stop-color="#30c8fa"/></linearGradient><linearGradient id="qtr" x1="0" x2="0" y1="0" y2="1"><stop offset="0" stop-color="#686c76"/><stop offset="1" stop-color="#30343c"/></linearGradient><linearGradient id="tr" x1="0" x2="1"><stop offset="0" stop-color="#d4d6d8" stop-opacity=".9"/><stop offset="0.5" stop-color="#ececee" stop-opacity=".95"/><stop offset="1" stop-color="#cdd0d2" stop-opacity=".9"/></linearGradient><clipPath id="fclip"><rect x="170.400" y="651.300" width="39.800" height="37.600" rx="2.500"/></clipPath><clipPath id="chclip"><circle cx="913" cy="669.900" r="22.300"/></clipPath></defs><g clip-path="url(#fclip)"><rect x="170.400" y="651.300" width="39.800" height="37.600" fill="url(#fw)"/><path d="M170.400,651.300h21.800c-2.600,6.400 -4.400,13.600 -5,20.400h5.200c-0.200,6 0.400,12 2.200,17.200h-24.200z" fill="url(#fb)"/></g><rect x="180.600" y="660.400" width="1.500" height="4.600" rx="0.700" fill="#10253c"/><rect x="198.600" y="660.400" width="1.500" height="4.600" rx="0.700" fill="#10253c"/><path d="M178,675.200c6.600,6.200 18,6.200 24.600,0" fill="none" stroke="#10253c" stroke-width="1.500" stroke-linecap="round"/><path d="M192.200,651.300c-2.600,6.400 -4.400,13.600 -5,20.400h5.200c-0.200,6 0.400,12 2.200,17.200" fill="none" stroke="#1c3a66" stroke-width="0.700" opacity=".55"/><circle cx="241.700" cy="670" r="21.300" fill="#f0f2f4"/><circle cx="241.700" cy="670" r="19.400" fill="url(#sf)"/><circle cx="241.700" cy="670" r="16.600" fill="none" stroke="#d6ecff" stroke-width="3" stroke-dasharray="0.600 2.300" opacity=".75"/><path d="M254.200,657.400l-14.600,10.400l4.200,4.400z" fill="#f0222e"/><path d="M229.200,682.600l10.400,-14.800l4.200,4.400z" fill="#f4f4f4"/><path d="M229.200,682.600l12.500,-12.600l2.100,2.200z" fill="#c8ccd0"/><path d="M254.200,657.400l-12.500,12.600l2.100,2.200z" fill="#b81820"/><g transform="rotate(-11 293.500 671)"><rect x="277.600" y="651.800" width="31.400" height="38.600" fill="#fbfbfb" stroke="#fbfbfb" stroke-width="2" stroke-dasharray="1.500 1.100"/><rect x="280.200" y="654.400" width="26.200" height="33.400" fill="url(#msky)"/></g><g><path d="M290.500,667.500c3.400,-1.600 7.400,-1.200 10.600,0.800c2.600,1.600 4.600,4.400 5.400,7.800c-2.400,-1.400 -4.800,-1.800 -7,-1.400c-2.400,0.400 -4.200,0.200 -6.200,-1z" fill="#7c4e26"/><path d="M286.800,668.600c-1.800,2.400 -3.400,5.600 -3.600,9c1.600,-1.200 3.200,-1.600 5,-1.400c1.400,0.200 2.600,-0.400 3.400,-1.600z" fill="#8a5a2e"/><path d="M289.200,674.200c1.200,2.800 3.600,5.400 6.400,6.800c-2.600,0.600 -5.200,0.200 -7.400,-1.400c-1,-1.800 -1,-3.600 -0.400,-5.400z" fill="#6e4420"/><ellipse cx="288.400" cy="666.400" rx="2.900" ry="6.200" transform="rotate(-28 288.400 666.400)" fill="#eadfca"/><circle cx="284.800" cy="659.400" r="2.300" fill="#dccfb8"/><path d="M283,659.800l-1.400,1.400l1.800,0.200z" fill="#4a3a20"/><path d="M291.400,668.600c2.800,0.200 5.800,1.200 8.400,3" stroke="#5a3a1c" stroke-width="0.800" fill="none"/></g><circle cx="304.600" cy="683.400" r="7.600" fill="none" stroke="#6a5a60" stroke-width="0.800" opacity=".55"/><circle cx="304.600" cy="683.400" r="5.400" fill="none" stroke="#6a5a60" stroke-width="0.600" opacity=".45"/><path d="M303.200,681.200c1.600,-1.400 4,-0.600 4,1.800c0,1.800 -1.400,3.400 -2.800,3.400c-1.600,0 -2.800,-1.600 -2.800,-3.200c0,-0.800 0.600,-1.600 1.600,-2z" fill="#48608c" opacity=".7"/><rect x="289.500" y="646.600" width="29.900" height="18" rx="9" fill="#e8263c"/><circle cx="345.300" cy="670.300" r="21.300" fill="url(#it)"/><circle cx="345.300" cy="670.300" r="18.800" fill="#f8f6fa"/><path d="M340.600,661.200l13.800,-3.400v18.200c0,2.600 -1.800,4.200 -4.200,4.200c-2,0 -3.200,-1.200 -3.200,-2.800c0,-2 1.800,-3.400 4.600,-3.400v-10.400l-8.200,2v13.800c0,2.600 -1.800,4.200 -4.200,4.200c-2,0 -3.200,-1.200 -3.200,-2.800c0,-2 1.800,-3.400 4.600,-3.400z" fill="url(#itn)"/><circle cx="396.700" cy="670" r="21.200" fill="#f2f4f6"/><circle cx="396.700" cy="670" r="19.800" fill="url(#as)"/><g stroke="#fff" stroke-width="2.900" stroke-linecap="round" fill="none"><path d="M395.600,658.600l-9.400,16.200"/><path d="M397.800,658.600l9.600,16.600"/><path d="M384.600,673.400h24.200"/><path d="M386.600,679.200l1,-1.800"/><path d="M407,679.400l-1,-1.800"/></g><circle cx="413" cy="655.300" r="8.300" fill="#e8263c"/><rect x="427.900" y="650.900" width="41.200" height="38.500" rx="2.500" fill="url(#spf)"/><circle cx="448.500" cy="670.200" r="15.400" fill="none" stroke="#2c2e32" stroke-width="3" stroke-dasharray="1.700 1.300"/><circle cx="448.500" cy="670.200" r="13" fill="#34363a"/><circle cx="448.500" cy="670.200" r="10.200" fill="#85898f"/><g stroke="#34363a" stroke-width="3.200"><path d="M448.500,670.200v-10.400"/><path d="M448.500,670.200l9,5.200"/><path d="M448.500,670.200l-9,5.200"/></g><circle cx="448.500" cy="670.200" r="2.800" fill="#34363a"/><circle cx="448.500" cy="670.200" r="10.200" fill="none" stroke="#34363a" stroke-width="1.200"/><rect x="478.2" y="647.900" width="43.7" height="41.800" fill="#0d2b37" stroke="#2cd6f2" stroke-width="2"/><rect x="530" y="647.900" width="43.3" height="41.800" fill="#2a0a3a" stroke="#e27af2" stroke-width="2"/><rect x="581.9" y="647.900" width="42.7" height="41.800" fill="#3a0a22" stroke="#f23c8c" stroke-width="2"/><rect x="633.4" y="647.900" width="41.9" height="41.800" fill="#2a180a" stroke="#d8801c" stroke-width="2"/><g transform="rotate(-8 706.900 669.800)"><rect x="690" y="650.400" width="33.800" height="39" rx="1.500" fill="#b9bcc4"/><rect x="690" y="650.400" width="33.800" height="8.400" fill="#2e3034"/><rect x="714.600" y="658.800" width="9.200" height="30.600" fill="#d46c12"/><rect x="691.2" y="660.0" width="6.800" height="5" fill="#d0d3da"/><rect x="699.0" y="660.0" width="6.800" height="5" fill="#d0d3da"/><rect x="706.8" y="660.0" width="6.800" height="5" fill="#d0d3da"/><rect x="715.400" y="660.0" width="7.600" height="5" fill="#e07c1e"/><rect x="691.2" y="665.9" width="6.800" height="5" fill="#d0d3da"/><rect x="699.0" y="665.9" width="6.800" height="5" fill="#d0d3da"/><rect x="706.8" y="665.9" width="6.800" height="5" fill="#d0d3da"/><rect x="715.400" y="665.9" width="7.600" height="5" fill="#e07c1e"/><rect x="691.2" y="671.8" width="6.800" height="5" fill="#d0d3da"/><rect x="699.0" y="671.8" width="6.800" height="5" fill="#d0d3da"/><rect x="706.8" y="671.8" width="6.800" height="5" fill="#d0d3da"/><rect x="715.400" y="671.8" width="7.600" height="5" fill="#e07c1e"/><rect x="691.2" y="677.7" width="6.800" height="5" fill="#d0d3da"/><rect x="699.0" y="677.7" width="6.800" height="5" fill="#d0d3da"/><rect x="706.8" y="677.7" width="6.800" height="5" fill="#d0d3da"/><rect x="715.400" y="677.7" width="7.600" height="5" fill="#e07c1e"/><rect x="691.2" y="683.6" width="6.800" height="5" fill="#d0d3da"/><rect x="699.0" y="683.6" width="6.800" height="5" fill="#d0d3da"/><rect x="706.8" y="683.6" width="6.800" height="5" fill="#d0d3da"/><rect x="715.400" y="683.6" width="7.600" height="5" fill="#e07c1e"/></g><rect x="735.100" y="648.600" width="46.500" height="36.600" rx="1.500" fill="#22262c"/><rect x="737" y="650.400" width="42.700" height="27.800" fill="url(#pscr)"/><rect x="735.100" y="679" width="46.500" height="6.200" fill="#d0d4d8"/><circle cx="758.300" cy="682.100" r="1.100" fill="#222"/><path d="M754,685.200h9l1.600,5h-12.200z" fill="#b8bcc2"/><rect x="750.400" y="690" width="16" height="1.800" rx="0.900" fill="#e2e4e8"/><g><path d="M752.600,659.200c2,-1.200 3.600,-1.200 5.400,-0.400l-1.400,5.200c-1.800,-0.800 -3.400,-0.800 -5.400,0.400z" fill="#f05a28"/><path d="M758.800,659c1.800,0.800 3.400,0.800 5.400,-0.400l-1.400,5.200c-2,1.200 -3.600,1.200 -5.400,0.400z" fill="#7cc43c"/><path d="M750.800,665.400c2,-1.200 3.600,-1.200 5.400,-0.400l-1.400,5.200c-1.800,-0.800 -3.400,-0.800 -5.400,0.400z" fill="#2ca0e8"/><path d="M757,665.200c1.800,0.800 3.400,0.800 5.400,-0.400l-1.400,5.200c-2,1.200 -3.600,1.200 -5.400,0.400z" fill="#f8c828"/></g><rect x="761.700" y="646.600" width="7.100" height="46.400" rx="3.500" fill="#e01a1c"/><rect x="772" y="646.600" width="7.300" height="46.400" rx="3.600" fill="#e01a1c"/><g fill="none" stroke-linecap="round" stroke-width="8.800"><path d="M818,658l-6,26.400" stroke="#135c9e"/><path d="M806,659.400l6,25" stroke="#1e8ad4"/><path d="M806,659.400l-6,25" stroke="#135c9e"/><path d="M792.400,655.400l7.600,29" stroke="#1e8ad4"/><path d="M826.600,657l-7.800,27.400" stroke="#1e8ad4"/></g><path d="M841,661.800c2,-9.600 12,-14.600 22,-14.400c10.600,0.200 19.600,6.600 19.800,15.400c0.200,11 -12.400,26.400 -21.400,29.800c-10.400,-4.800 -22.400,-20.600 -20.400,-30.800z" fill="#a85a50"/><path d="M841,661.800c-2,10.200 10,26 20.400,30.800c1.800,-12 0.600,-24.400 -9.400,-32.400z" fill="#52c232"/><path d="M843.200,656.600c4,-6.400 11.800,-9.400 19.800,-9.200c10.600,0.200 19.600,6.600 19.800,15.400c0,1.400 -0.200,2.800 -0.600,4.400c-4,-8.800 -12.400,-14.200 -24,-13.400c-5.600,0.400 -10.400,1.400 -15,2.800z" fill="#2392d2"/><path d="M848,655.800c5.200,-1.600 10.400,-1.800 15.800,-0.600c-4.600,0.600 -7.600,2.200 -8.800,4.600c5.600,9.400 8.600,20.200 6.400,32.800c0.200,-12.600 -3.400,-24.400 -13.400,-36.800z" fill="#fbfbfb"/><path d="M843.200,656.600c1.400,-0.400 3,-0.800 4.800,-0.800l3.400,4c-3,-0.400 -6.400,0.400 -10,2c0.400,-1.900 1,-3.600 1.800,-5.200z" fill="#8a7a5a"/><g clip-path="url(#chclip)"><rect x="890" y="647" width="46" height="46" fill="#f9c92e"/><path d="M913,669.900l-19.400,-11.200l-6,11.200l14.200,24.600l9,0z" fill="#27a24e"/><path d="M913,669.900l-9.800,17l-6.200,10h-8v-40z" fill="#27a24e"/><path d="M888,645h50v19.400h-25l-9.600,5.600l-12,-20.800z" fill="#d93a3c"/><path d="M913,669.900l-20.800,-12l-2.200,-12h50v18.400z" fill="#d93a3c"/><path d="M913,669.900l22.400,-5.600l2,2l-2,30h-24l1.600,-4z" fill="#f9c92e"/></g><circle cx="913" cy="669.900" r="10.600" fill="#fafafa"/><circle cx="913" cy="669.900" r="8.300" fill="#4a82ea"/><circle cx="964.800" cy="669.900" r="21.200" fill="url(#qtr)"/><circle cx="964.800" cy="669.900" r="13.600" fill="url(#qt)"/><path d="M966,670l15.600,15" stroke="#3a3e46" stroke-width="7.600" stroke-linecap="round"/><path d="M985.200,689.400l-6.400,-0.400l6.800,-6.800z" fill="#30343a"/><path d="M1030,646.400h19.400v3h-19.400z" fill="#e4e4e4"/><path d="M1024,648.400h21.400c0.600,3.400 1.600,5.400 4,7.400c1.800,1.600 3.600,3.400 5.200,7v28.800h-30.600z" fill="#f9f9f9"/><path d="M1045.400,648.400c0.600,3.400 1.600,5.400 4,7.400c1.800,1.600 3.600,3.400 5.200,7c-2.400,-2.400 -4.800,-2.800 -7.600,-2.200c0.400,-4.600 -0.200,-8.600 -1.600,-12.200z" fill="#d2d2d2"/><rect x="1036.300" y="648.400" width="5.400" height="25.800" rx="1.500" fill="#5a5a5a"/><g fill="#cfcfcf"><rect x="1037.300" y="650.200" width="3.400" height="1.700"/><rect x="1037.300" y="653.700" width="3.400" height="1.700"/><rect x="1037.300" y="657.200" width="3.400" height="1.700"/><rect x="1037.300" y="660.700" width="3.400" height="1.700"/></g><rect x="1037.200" y="664.200" width="3.600" height="8.600" rx="1.600" fill="#303030"/><rect x="1038.300" y="665.600" width="1.400" height="3.600" fill="#b4b4b4"/><path d="M1076.400,651c2,-3.600 6,-5 9.600,-4.200c2,-1.600 5,-1.800 7,-0.400c3.800,-1.200 8.600,0.200 12,4.600v4h-28.600z" fill="#eaeaec"/><path d="M1081,653.600l4.600,-5l4.400,5.400zM1092.400,653.800l3.600,-5.600l5.400,5z" fill="#323c46"/><path d="M1085.600,648.600l3,3.600l2.600,-3z" fill="#3aa89a"/><path d="M1096,648.200l3,3l2.400,-1.200z" fill="#b8505c"/><path d="M1089.600,648.200l2.400,5.600l2,-5.200z" fill="#f4f4f4"/><path d="M1073.300,651.200c2,3.400 33,3.400 35,0l-4.200,36.800c-0.200,2.400 -2.200,3.600 -4.400,3.600h-17.800c-2.200,0 -4.200,-1.200 -4.400,-3.600z" fill="url(#tr)"/><path d="M1073.300,651.200c2,3.400 33,3.400 35,0" fill="none" stroke="#c6c8cc" stroke-width="0.900"/><path d="M1073.300,651.200c3,-2.400 32,-2.400 35,0" fill="none" stroke="#dcdde0" stroke-width="0.900"/><path d="M1078.400,689.600c5,2.200 20.400,2.200 25.600,0" fill="none" stroke="#b8bcc0" stroke-width="0.800"/><circle cx="190.4" cy="698.500" r="1.300" fill="#120c0c"/><circle cx="293.5" cy="698.500" r="1.300" fill="#120c0c"/><circle cx="397" cy="698.500" r="1.300" fill="#120c0c"/><circle cx="654.8" cy="698.500" r="1.300" fill="#120c0c"/><circle cx="913" cy="698.500" r="1.300" fill="#120c0c"/><circle cx="964.6" cy="698.500" r="1.300" fill="#120c0c"/></svg>
<span class="t" style="left:292.80px;top:650.80px;font:700 10px/12.00px 'Liberation Sans',sans-serif;color:#fff;transform:scaleX(0.9191);transform-origin:0 0;">1,380</span>
<span class="t" style="left:410.60px;top:649.56px;font:700 10.4px/12.48px 'Liberation Sans',sans-serif;color:#fff;">1</span>
<span class="t" style="left:487.20px;top:649.00px;font:700 30.5px/36.60px 'Liberation Sans',sans-serif;color:#2fd2f2;transform:scaleX(0.6969);transform-origin:0 0;">Ps</span>
<span class="t" style="left:540.00px;top:649.00px;font:700 30.5px/36.60px 'Liberation Sans',sans-serif;color:#e282f6;transform:scaleX(0.7419);transform-origin:0 0;">Pr</span>
<span class="t" style="left:593.00px;top:649.00px;font:700 30.5px/36.60px 'Liberation Sans',sans-serif;color:#f644a0;transform:scaleX(0.7637);transform-origin:0 0;">Id</span>
<span class="t" style="left:642.70px;top:649.00px;font:700 30.5px/36.60px 'Liberation Sans',sans-serif;color:#f6921e;transform:scaleX(0.7672);transform-origin:0 0;">Ai</span>
<span class="t" style="left:1035.00px;top:683.82px;font:400 5.8px/6.96px 'Liberation Sans',sans-serif;color:#8c8c8c;">ZIP</span>
</body></html>
